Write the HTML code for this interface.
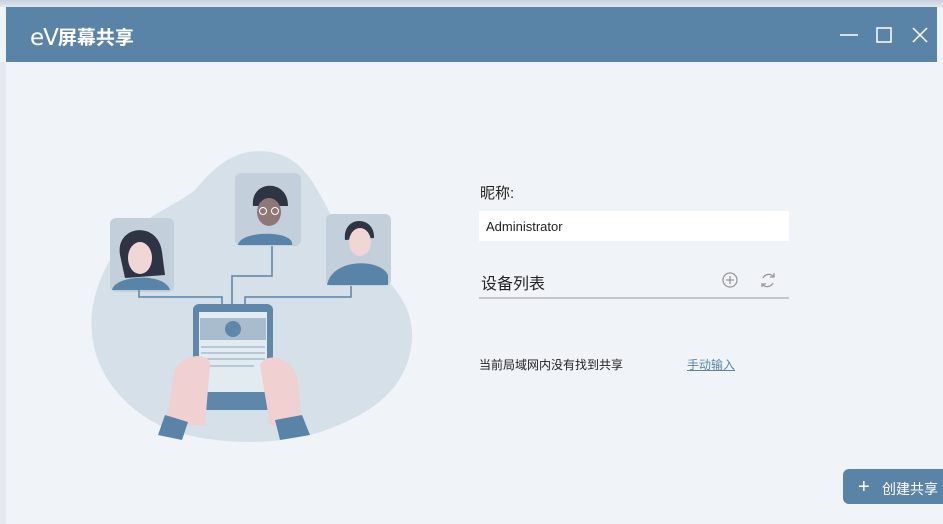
<!DOCTYPE html>
<html><head><meta charset="utf-8"><style>
body{margin:0;width:943px;height:524px;overflow:hidden;background:#eef1f6;font-family:"Liberation Sans","Noto Sans CJK SC",sans-serif;position:relative}
.frame{position:absolute;left:0;top:0;width:943px;height:524px;background:#f0f3f8}
.topstrip{position:absolute;left:0;top:0;width:943px;height:7px;background:linear-gradient(#c9d3de,#dfe6ee)}
.bar{position:absolute;left:6px;top:7px;width:931px;height:55px;background:#5a84a7}
.logo{position:absolute;left:30px;top:23px;color:#fff;font-size:19px;font-weight:bold}
.abs{position:absolute}
</style></head><body>
<div class="frame"></div>
<div class="topstrip"></div>
<div class="bar"></div>
<div class="logo"><span style="font-family:'DejaVu Sans',sans-serif;font-weight:normal;font-size:23px;position:relative;top:1px;letter-spacing:-1px">eV</span>屏幕共享</div>
<svg class="abs" style="left:830px;top:20px" width="110" height="30">
<line x1="10" y1="15" x2="28" y2="15" stroke="#fff" stroke-width="1.5"/>
<rect x="47" y="8" width="14" height="14" fill="none" stroke="#fff" stroke-width="1.5"/>
<path d="M83 8 L97 22 M97 8 L83 22" stroke="#fff" stroke-width="1.5"/>
</svg>
<div class="abs" style="left:0;top:62px;width:6px;height:462px;background:#e4e9ef"></div>

<svg class="abs" style="left:70px;top:140px" width="350" height="310">
<path d="M40 120 C60 80 100 70 125 50 C150 20 170 8 200 12 C240 18 250 60 270 90 C300 130 345 150 342 200 C338 250 300 275 250 292 C200 308 120 305 80 280 C30 250 0 190 40 120Z" fill="#d6e0e9"/>
<rect x="40" y="78" width="64" height="74" rx="6" fill="#c3d0dc"/>
<rect x="165" y="33" width="66" height="73" rx="6" fill="#c3d0dc"/>
<rect x="256" y="74" width="65" height="72" rx="6" fill="#c3d0dc"/>
<path d="M69 150 V157 H152 V165 M202 106 V136 H162 V165 M281 146 V157 H175 V165" stroke="#5c84a7" stroke-width="1.5" fill="none"/>
<path d="M50 115 C45 85 88 80 92 112 L95 135 L55 138Z" fill="#2f3444"/>
<ellipse cx="70" cy="118" rx="12" ry="16" fill="#f0d7d6"/>
<path d="M42 150 C45 135 95 132 100 150Z" fill="#5a84a7"/>
<path d="M183 66 C180 40 218 38 218 66Z" fill="#2f3444"/>
<ellipse cx="199" cy="72" rx="12" ry="14" fill="#8e7776"/>
<circle cx="193" cy="71" r="3.5" fill="none" stroke="#fff" stroke-width="1"/>
<circle cx="205" cy="71" r="3.5" fill="none" stroke="#fff" stroke-width="1"/>
<path d="M168 105 C170 90 225 90 222 105Z" fill="#5a84a7"/>
<path d="M275 100 C272 75 305 75 304 98Z" fill="#2f3444"/>
<ellipse cx="290" cy="102" rx="11" ry="14" fill="#f0d7d6"/>
<path d="M257 145 C262 118 310 118 318 135 L318 145Z" fill="#5a84a7"/>
<rect x="123" y="164" width="80" height="106" rx="6" fill="#5f87a9"/>
<rect x="129" y="172" width="68" height="80" fill="#e2ebef"/>
<rect x="130" y="178" width="66" height="22" fill="#a9bccd"/>
<circle cx="163" cy="189" r="8" fill="#5f87a9"/>
<path d="M131 207H195M131 213H195M131 219H195M131 226H184" stroke="#a9bccd" stroke-width="1.5"/>
<path d="M105 230 C110 215 140 210 140 225 L135 285 L95 285Z" fill="#f0d0d0"/>
<path d="M190 225 C195 212 222 215 228 240 L232 285 L200 285Z" fill="#f0d0d0"/>
<path d="M88 295 L95 275 L118 282 L112 300Z" fill="#5a84a7"/>
<path d="M205 280 L232 275 L240 295 L210 300Z" fill="#5a84a7"/>
</svg>

<div class="abs" style="left:480px;top:182px;font-size:15px;color:#222">昵称:</div>
<div class="abs" style="left:479px;top:211px;width:310px;height:30px;background:#fff"></div>
<div class="abs" style="left:486px;top:219px;font-size:13px;color:#222">Administrator</div>
<div class="abs" style="left:481px;top:270px;font-size:16px;color:#222">设备列表</div>
<svg class="abs" style="left:720px;top:270px" width="60" height="20">
<circle cx="10" cy="10" r="7" fill="none" stroke="#999" stroke-width="1.3"/>
<path d="M10 6V14M6 10H14" stroke="#999" stroke-width="1.3"/>
<path d="M43 8 A6.5 6.5 0 0 1 54 7 M53 13 A6.5 6.5 0 0 1 42 14 M54 3V7H50 M42 17V14H46" fill="none" stroke="#999" stroke-width="1.3"/>
</svg>
<div class="abs" style="left:479px;top:297px;width:310px;height:2px;background:#c4c6cb"></div>
<div class="abs" style="left:479px;top:356px;font-size:12px;color:#222">当前局域网内没有找到共享</div>
<div class="abs" style="left:687px;top:356px;font-size:12px;color:#5a84a7;text-decoration:underline">手动输入</div>
<div class="abs" style="left:843px;top:469px;width:100px;height:35px;background:#5a84a7;border-radius:6px 0 0 6px"></div>
<div class="abs" style="left:858px;top:477px;color:#fff;font-size:20px;line-height:20px">+</div>
<div class="abs" style="left:882px;top:479px;color:#fff;font-size:14px">创建共享</div>
</body></html>
